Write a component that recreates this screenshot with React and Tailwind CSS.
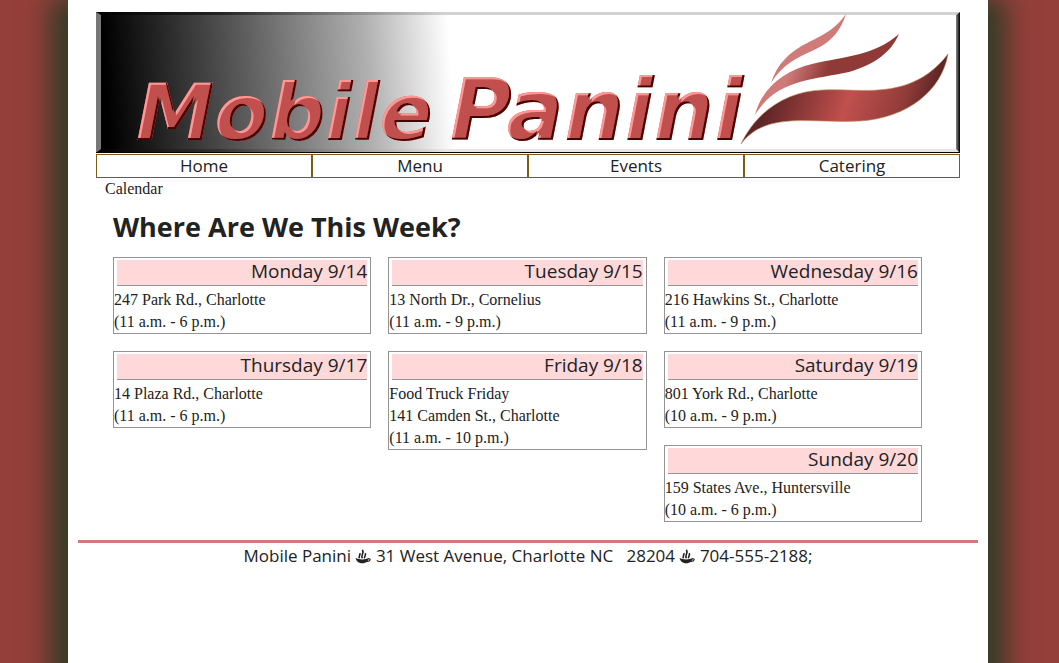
const days = [
  [
    { day: "Monday 9/14", lines: ["247 Park Rd., Charlotte", "(11 a.m. - 6 p.m.)"] },
    { day: "Thursday 9/17", lines: ["14 Plaza Rd., Charlotte", "(11 a.m. - 6 p.m.)"] },
  ],
  [
    { day: "Tuesday 9/15", lines: ["13 North Dr., Cornelius", "(11 a.m. - 9 p.m.)"] },
    { day: "Friday 9/18", lines: ["Food Truck Friday", "141 Camden St., Charlotte", "(11 a.m. - 10 p.m.)"] },
  ],
  [
    { day: "Wednesday 9/16", lines: ["216 Hawkins St., Charlotte", "(11 a.m. - 9 p.m.)"] },
    { day: "Saturday 9/19", lines: ["801 York Rd., Charlotte", "(10 a.m. - 9 p.m.)"] },
    { day: "Sunday 9/20", lines: ["159 States Ave., Huntersville", "(10 a.m. - 6 p.m.)"] },
  ],
];

const links = ["Home", "Menu", "Events", "Catering"];

function Banner() {
  return (
    <svg viewBox="0 0 864 141" className="block w-full" role="img" aria-label="Mobile Panini">
      <defs>
        <linearGradient id="sheet" gradientUnits="userSpaceOnUse" x1="5" y1="0" x2="350" y2="-22">
          <stop offset="0" stopColor="#000" />
          <stop offset="0.42" stopColor="#606060" />
          <stop offset="0.76" stopColor="#b0b0b0" />
          <stop offset="1" stopColor="#fff" />
        </linearGradient>
        <linearGradient id="topEdge" gradientUnits="userSpaceOnUse" x1="0" y1="0" x2="350" y2="0">
          <stop offset="0" stopColor="#000" />
          <stop offset="0.35" stopColor="#222" />
          <stop offset="1" stopColor="#d2d2d2" />
        </linearGradient>
        <linearGradient id="bottomEdge" gradientUnits="userSpaceOnUse" x1="0" y1="0" x2="350" y2="0">
          <stop offset="0" stopColor="#000" />
          <stop offset="0.35" stopColor="#333" />
          <stop offset="1" stopColor="#e6e6e6" />
        </linearGradient>
        <linearGradient id="rightEdge">
          <stop offset="0" stopColor="#8a8c8e" />
          <stop offset="0.5" stopColor="#3f4144" />
          <stop offset="1" stopColor="#000" />
        </linearGradient>
        <linearGradient id="mid" gradientUnits="userSpaceOnUse" x1="692" y1="62" x2="726" y2="74">
          <stop offset="0" stopColor="#cf7b79" />
          <stop offset="1" stopColor="#903a38" />
        </linearGradient>
        <linearGradient id="low" gradientUnits="userSpaceOnUse" x1="672" y1="90" x2="850" y2="150">
          <stop offset="0" stopColor="#5e2526" />
          <stop offset="0.4" stopColor="#c0504d" />
          <stop offset="0.68" stopColor="#923c3a" />
          <stop offset="0.82" stopColor="#5e2526" />
        </linearGradient>
        <filter id="bevel" x="-5%" y="-10%" width="110%" height="120%">
          <feOffset in="SourceAlpha" dx="2" dy="2" result="down" />
          <feOffset in="SourceAlpha" dx="-2" dy="-2" result="up" />
          <feFlood floodColor="#ff9794" />
          <feComposite in2="SourceAlpha" operator="in" />
          <feComposite in2="down" operator="out" result="light" />
          <feFlood floodColor="#4a0000" />
          <feComposite in2="SourceAlpha" operator="in" />
          <feComposite in2="up" operator="out" result="shade" />
          <feMerge result="edges">
            <feMergeNode in="light" />
            <feMergeNode in="shade" />
          </feMerge>
          <feGaussianBlur in="edges" stdDeviation="0.5" result="soft" />
          <feMerge>
            <feMergeNode in="SourceGraphic" />
            <feMergeNode in="soft" />
          </feMerge>
        </filter>
      </defs>
      <rect width="864" height="141" fill="url(#sheet)" />
      <path d="M0 0H864L860 3H5Z" fill="url(#topEdge)" />
      <path d="M5 137H860L864 140H0Z" fill="url(#bottomEdge)" />
      <path d="M0 0L5 3V137L0 141Z" fill="#777" />
      <path d="M864 0L860 3V137L864 141Z" fill="url(#rightEdge)" />
      <path d="M0 140H864V141H0Z" fill="#000" />
      <path d="M750 2C745 18 736 30 718 38C700 46 686 53 675 71C681 52 693 40 713 30C730 22 741 15 750 2Z" fill="#cf7b79" />
      <path d="M803 22C795 40 780 52 753 60C715 68 680 68 659 103C666 75 690 58 716 52C750 44 778 44 803 22Z" fill="url(#mid)" />
      <path d="M852 42C846 78 812 106 764 109C718 112 670 98 645 132C660 100 690 79 727 78C765 76 815 90 852 42Z" fill="url(#low)" stroke="#c18a59" strokeWidth="0.6" />
      <g fill="#c0504d" filter="url(#bevel)" fontFamily="DejaVu Sans, sans-serif" fontWeight="700" fontStyle="italic">
        <text x="40" y="128" fontSize="79">Mobile</text>
        <text x="354" y="128" fontSize="85">Panini</text>
      </g>
    </svg>
  );
}

function Steam() {
  return (
    <svg viewBox="0 0 14 14" className="inline-block h-4 w-4 align-[-2px]" fill="#222" aria-hidden="true">
      <path d="M0.500 8.500C3 10.500 9.500 10.500 12 8.500C12 11.500 9.500 13.300 6.500 13.300C3 13.300 1 11.500 0.500 8.500Z" />
      <path d="M11.500 9.500C14 9 14 11.500 10.500 11.800" fill="none" stroke="#222" />
      <path d="M4 9C2.500 7.500 5 6.500 4.200 4.500M6.500 9C4.500 6.500 8.500 4.500 6.500 1.500M8.500 9C7.500 7.500 10 6.500 9 4.500" fill="none" stroke="#222" strokeWidth="1.4" />
    </svg>
  );
}

export default function App() {
  return (
    <div className="min-h-screen overflow-hidden bg-[#953f3b] pr-[3px] text-[#222]">
      <div className="mx-auto min-h-screen w-[88%] max-w-[920px] bg-white px-2.5 pt-3 shadow-[0_15px_25px_18px_#343c26]">
        <header className="mx-[18px]">
          <Banner />
          <nav aria-label="Main" className="mt-px">
            <ul className="grid grid-cols-4">
              {links.map((name) => (
                <li key={name} className="border border-[#7a5c10]">
                  <a href="#" className="block text-center font-['Open_Sans',sans-serif] text-[17px] leading-[22px]">{name}</a>
                </li>
              ))}
            </ul>
          </nav>
          <a href="#" className="ml-[9px] block font-['Liberation_Serif',serif] text-base leading-[22px]">Calendar</a>
        </header>
        <main className="mr-14 ml-[35px]">
          <h1 className="pt-2 pb-[11px] font-['Open_Sans',sans-serif] text-[27px] leading-[38px] font-bold">Where Are We This Week?</h1>
          <div className="grid grid-cols-3 items-start gap-x-[17px]">
            {days.map((column, i) => (
              <div key={i} className="flex flex-col gap-[17px]">
                {column.map(({ day, lines }) => (
                  <section key={day} className="border border-[#949494]">
                    <h2 className="mx-[3px] mt-0.5 mb-[3px] border-b border-[#949494] bg-[#ffd9d9] pb-[3px] text-right font-['Open_Sans',sans-serif] text-[19px] leading-[22px]">{day}</h2>
                    {lines.map((line) => (
                      <p key={line} className="font-['Liberation_Serif',serif] text-base leading-[22px]">{line}</p>
                    ))}
                  </section>
                ))}
              </div>
            ))}
          </div>
        </main>
        <footer className="mt-[18px] border-t-3 border-[#cf7b79] text-center font-['Open_Sans',sans-serif] text-[17px] leading-[25px]">
          Mobile Panini <Steam /> 31 West Avenue, Charlotte NC &nbsp; 28204 <Steam /> 704-555-2188;
        </footer>
      </div>
    </div>
  );
}
